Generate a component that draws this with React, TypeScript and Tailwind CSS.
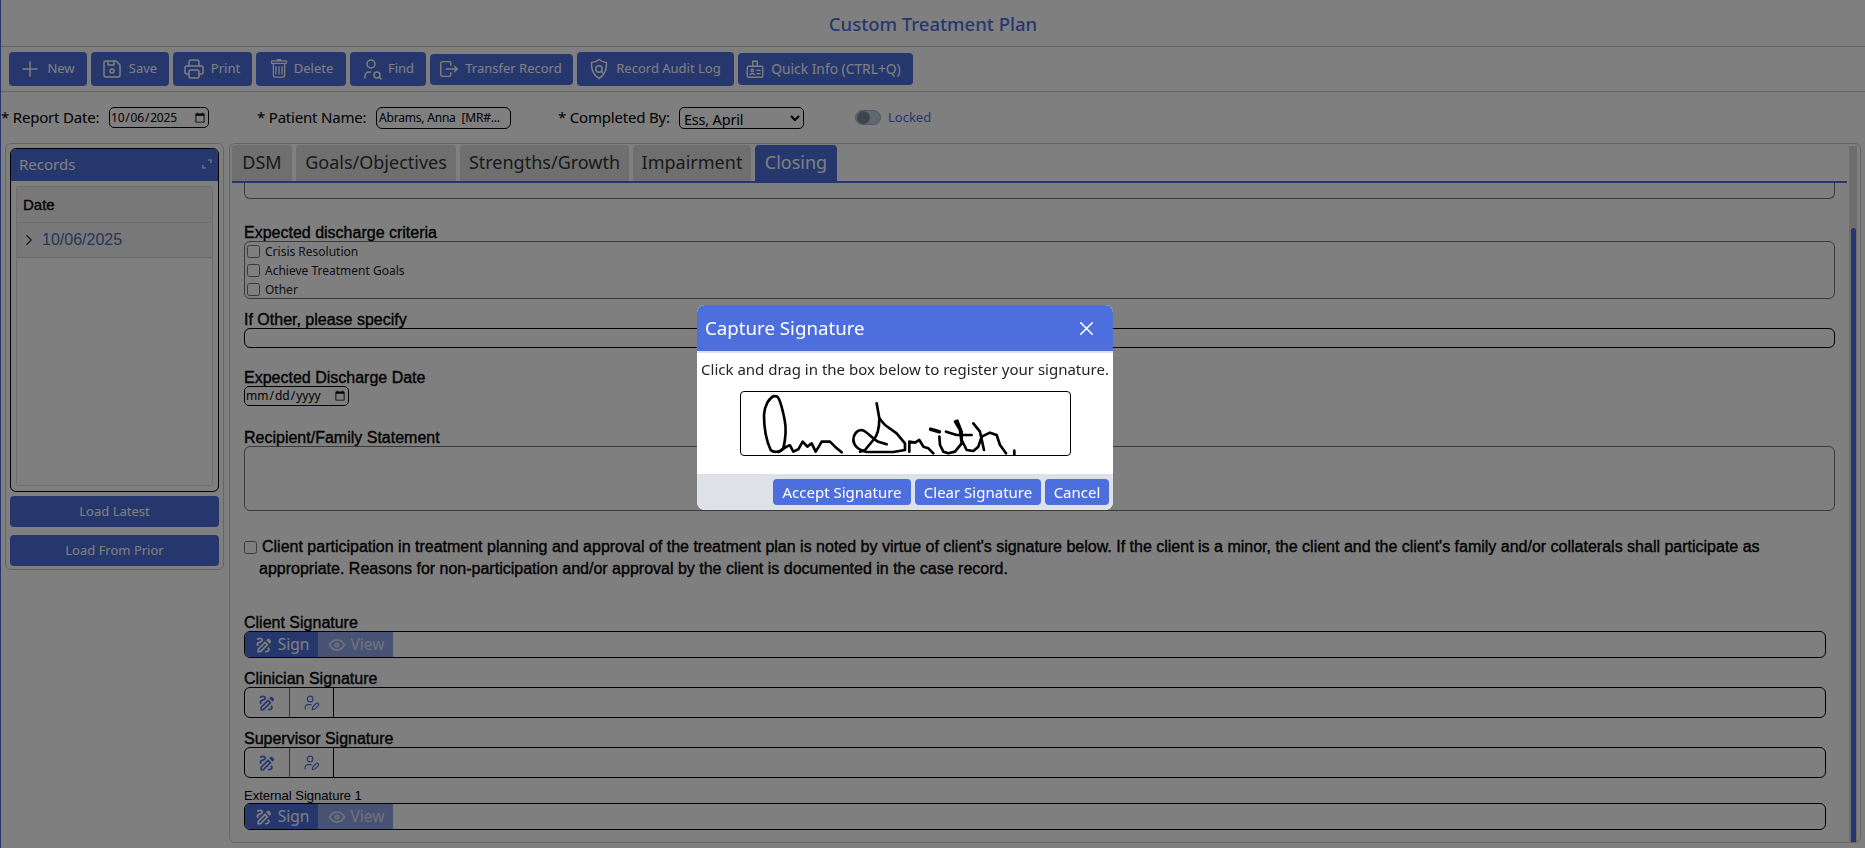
import { TbPlus, TbDeviceFloppy, TbPrinter, TbUserSearch, TbLogout, TbEye, TbChevronRight, TbX } from "react-icons/tb";
import { BsTrash } from "react-icons/bs";
import { MdOutlineDraw } from "react-icons/md";
import { UserPen } from "lucide-react";
import type { ReactNode } from "react";

function AuditIcon() {
  return (
    <svg width="24" height="24" viewBox="0 0 24 24" fill="none" stroke="currentColor" strokeWidth="1.5" strokeLinecap="round" strokeLinejoin="round">
      <path d="M12 2.5c2.5 2 5 3 7.5 3 .4 6.5-1.6 12.5-7.5 16-5.900-3.500-7.900-9.500-7.500-16 2.500 0 5-1 7.500-3z" />
      <circle cx="12" cy="12" r="3.200" />
      <path d="M14.300 14.300l1.700 1.700" />
    </svg>
  );
}

function BadgeIcon() {
  return (
    <svg width="22" height="22" viewBox="0 0 24 24" fill="none" stroke="currentColor" strokeWidth="1.5" strokeLinecap="round" strokeLinejoin="round">
      <rect x="3.500" y="9" width="17" height="12" rx="1.500" />
      <path d="M9.500 9V3.500h5V9" />
      <circle cx="9" cy="13.500" r="1.300" />
      <path d="M6.500 18c.5-1.500 4.500-1.500 5 0M14 13.500h3.500M14 17h3.500" />
    </svg>
  );
}

function ExpandIcon() {
  return (
    <svg width="10" height="10" viewBox="0 0 10 10" fill="none" stroke="currentColor" strokeWidth="1.200">
      <path d="M6 1h3v3M1 6v3h3" />
    </svg>
  );
}

const toolbar = [
  { label: "New", icon: <TbPlus size={24} strokeWidth={1.5} />, w: "w-[78px]", h: "h-[34px]", text: "pr-[3px] text-[13px]" },
  { label: "Save", icon: <TbDeviceFloppy size={24} strokeWidth={1.5} />, w: "w-[78px]", h: "h-[34px]", text: "pr-[3px] text-[13px]" },
  { label: "Print", icon: <TbPrinter size={24} strokeWidth={1.5} />, w: "w-[79px]", h: "h-[34px]", text: "pr-[3px] text-[13px]" },
  { label: "Delete", icon: <BsTrash size={20} />, w: "w-[90px]", h: "h-[34px]", text: "text-[13px]" },
  { label: "Find", icon: <TbUserSearch size={24} strokeWidth={1.5} />, w: "w-[76px]", h: "h-[34px]", text: "pr-[3px] text-[13px]" },
  { label: "Transfer Record", icon: <TbLogout size={22} strokeWidth={1.5} />, w: "w-[143px]", h: "h-[31px]", text: "pr-[3px] text-[13px]" },
  { label: "Record Audit Log", icon: <AuditIcon />, w: "w-[157px]", h: "h-[34px]", text: "pr-[3px] text-[13px]" },
  { label: "Quick Info (CTRL+Q)", icon: <BadgeIcon />, w: "w-[175px]", h: "h-[32px]", text: "pr-[6px] text-[13.800px]" },
];

const tabs = [
  { label: "DSM", w: "w-[60px]" },
  { label: "Goals/Objectives", w: "w-[160px]" },
  { label: "Strengths/Growth", w: "w-[169px]" },
  { label: "Impairment", w: "w-[118px]" },
];

function Label({ children, className = "" }: { children: ReactNode; className?: string }) {
  return (
    <div className={`h-[18px] font-['Liberation_Sans',sans-serif] text-[16px] leading-[20px] whitespace-nowrap text-black [-webkit-text-stroke:0.35px_black] ${className}`}>
      {children}
    </div>
  );
}

function SignButtons() {
  return (
    <div className="mr-[9px] flex h-[27px] overflow-hidden rounded-[6px] border border-black text-[15.500px] leading-none">
      <div className="flex w-[73px] items-center justify-center gap-1 bg-[#4d6fdd] text-white">
        <MdOutlineDraw size={20} />
        Sign
      </div>
      <div className="flex w-[75px] items-center justify-center gap-1 bg-[#8fa5ea] text-[#dfe5f8]">
        <TbEye size={20} />
        View
      </div>
    </div>
  );
}

function IconRow({ label }: { label: string }) {
  return (
    <div className="mt-[11px]">
      <Label>{label}</Label>
      <div className="mr-[9px] flex h-[31px] overflow-hidden rounded-[6px] border border-black text-[#4d6fdd]">
        <div className="flex w-[45px] items-center justify-center border-r border-[#4d6fdd]">
          <MdOutlineDraw size={20} />
        </div>
        <div className="flex w-[44px] items-center justify-center border-r border-black">
          <UserPen size={17} strokeWidth={1.6} />
        </div>
      </div>
    </div>
  );
}

function Signature() {
  return (
    <svg viewBox="741 392 329 63" className="h-full w-full" fill="none" stroke="black" strokeWidth="8" strokeLinejoin="round" strokeLinecap="round">
      <g transform="translate(750 390) scale(0.3333)">
        <path d="M72 18 C58 24 44 44 42 75 C42 110 48 150 62 180 C70 188 90 188 100 175 C106 150 110 120 104 90 C98 60 92 30 82 20 Z" />
        <path d="M85 186 C100 178 110 166 120 166 L130 185 L145 178 L158 155 L172 170 L185 160 L197 185 L205 172 L215 155 L240 155 L255 170 L275 187" />
        <path d="M380 40 L388 85 L405 105 L440 130 L465 160 L465 180 L430 186 L350 186 C330 182 312 170 310 150 C310 132 322 120 335 120 C350 122 370 150 385 155 L410 163" />
        <path d="M388 85 C388 115 380 140 370 150 L345 180 L330 185" />
      </g>
      <g transform="translate(880 390) scale(0.3333)">
        <path d="M88 185 L88 155 L105 158 L118 150 L130 170 L145 175 L160 190" />
        <path d="M152 118 L178 125" strokeWidth="11" />
        <path d="M178 140 L180 165 L190 185 L205 190 L225 185 L245 160 L240 120 L225 95 L232 92 L245 125 L245 150 L260 180 L280 183 L295 170 L305 140" />
        <path d="M198 125 L230 135 L275 135" />
        <path d="M280 100 L300 125 L312 180" />
        <path d="M305 140 L330 128 L350 135 L360 165 L378 190" />
        <path d="M403 182 L403 195" />
      </g>
    </svg>
  );
}

export default function App() {
  return (
    <div className="relative h-[848px] overflow-hidden border-l border-[#4d6fdd] bg-white font-['Noto_Sans',sans-serif] text-black">
      {/* Page title */}
      <div className="flex h-[47px] items-center justify-center border-b border-[#ccc] pt-[2px] text-[18.500px] font-medium text-[#4d6fdd]">
        Custom Treatment Plan
      </div>

      {/* Toolbar */}
      <div className="flex h-[45px] items-center gap-1 border-b border-[#ccc] pl-2">
        {toolbar.map((b) => (
          <div key={b.label} className={`flex ${b.w} ${b.h} ${b.text} items-center justify-center gap-[5px] rounded-[4px] bg-[#4d6fdd] text-white`}>
            {b.icon}
            <span className="whitespace-nowrap">{b.label}</span>
          </div>
        ))}
      </div>

      {/* Filters */}
      <div className="flex h-[51px] items-center text-[15px] tracking-[-0.2px]">
        <span className="w-[108px] whitespace-nowrap">* Report Date:</span>
        <input type="date" defaultValue="2025-10-06" className="h-[21px] w-[100px] rounded-[5px] border border-black px-0 text-[12px]" />
        <span className="ml-[48px] w-[119px] whitespace-nowrap">* Patient Name:</span>
        <div className="flex h-[22px] w-[135px] items-center overflow-hidden rounded-[6px] border border-black px-[2px] text-[12px] whitespace-pre">Abrams, Anna  [MR#...</div>
        <span className="ml-[47px] w-[121px] whitespace-nowrap">* Completed By:</span>
        <select className="h-[22px] w-[125px] rounded-[5px] border border-black text-[14.500px]" defaultValue="Ess, April">
          <option>Ess, April</option>
        </select>
        <div className="ml-[51px] flex h-[15px] w-[26px] items-center rounded-full border border-[#9fb0c8] bg-[#c5d0e0] pl-[1px]">
          <div className="h-[13px] w-[13px] rounded-full bg-[#7f8b9c]" />
        </div>
        <span className="ml-[7px] text-[13px] tracking-normal text-[#4d6fdd]">Locked</span>
      </div>

      {/* Main */}
      <div className="flex gap-[5px] pl-1 pr-1">
        {/* Records sidebar */}
        <div className="h-[427px] w-[219px] rounded-[6px] border border-[#ccc] px-1 pt-1">
          <div className="flex h-[344px] flex-col overflow-hidden rounded-[6px] border border-black">
            <div className="flex h-[32px] items-center justify-between bg-[#4d6fdd] pb-[2px] pl-2 pr-[6px] text-[15px] text-white">
              Records
              <ExpandIcon />
            </div>
            <div className="m-[5px] flex flex-1 flex-col rounded-[3px] border border-[#ddd]">
              <div className="flex h-[36px] items-center border-b border-[#ddd] bg-[#f1f1f1] pl-[6px] pt-[2px] font-['Liberation_Sans',sans-serif] text-[15px] [-webkit-text-stroke:0.3px_black]">Date</div>
              <div className="flex h-[35px] items-center gap-[4px] border-b border-[#ddd] bg-[#f1f1f1] pl-[3px] font-['Liberation_Sans',sans-serif] text-[16px] text-[#4b6cb7]">
                <TbChevronRight size={18} strokeWidth={1.5} className="text-[#333]" />
                10/06/2025
              </div>
            </div>
          </div>
          <div className="mt-[4px] flex h-[31px] items-center justify-center rounded-[4px] bg-[#4d6fdd] text-[13px] text-white">Load Latest</div>
          <div className="mt-[8px] flex h-[31px] items-center justify-center rounded-[4px] bg-[#4d6fdd] text-[13px] text-white">Load From Prior</div>
        </div>

        {/* Form panel */}
        <div className="flex h-[700px] flex-1 rounded-[6px] border border-[#ccc] pl-[2px] pr-[3px] pt-[1px]">
          <div className="min-w-0 flex-1">
            <div className="flex h-[38px] gap-1 border-b-2 border-[#4d6fdd]">
              {tabs.map((t) => (
                <div key={t.label} className={`flex ${t.w} h-[36px] items-center justify-center rounded-t-[4px] bg-[#dfdfdf] pb-[2px] text-[18px] text-[#333]`}>
                  {t.label}
                </div>
              ))}
              <div className="flex h-[36px] w-[82px] items-center justify-center rounded-t-[4px] bg-[#4d6fdd] pb-[2px] text-[18px] text-white">Closing</div>
            </div>

            <div className="pl-[12px] pr-[12px]">
              <div className="h-[16px] rounded-b-[6px] border border-t-0 border-[#777]" />

              <Label className="mt-[24px]">Expected discharge criteria</Label>
              <div className="flex h-[58px] flex-col rounded-[6px] border border-[#777] pl-[2px] text-[12px] leading-[19px] text-[#222]">
                {["Crisis Resolution", "Achieve Treatment Goals", "Other"].map((o) => (
                  <div key={o} className="flex items-center gap-[5px]">
                    <input type="checkbox" className="h-[13px] w-[13px]" readOnly />
                    {o}
                  </div>
                ))}
              </div>

              <Label className="mt-[11px]">If Other, please specify</Label>
              <div className="h-[20px] rounded-[6px] border border-black" />

              <Label className="mt-[20px]">Expected Discharge Date</Label>
              <input type="date" className="block h-[20px] w-[105px] rounded-[5px] border border-black px-0 text-[12px]" />

              <Label className="mt-[22px]">Recipient/Family Statement</Label>
              <div className="h-[65px] rounded-[6px] border border-[#777]" />

              <div className="mt-[25px] font-['Liberation_Sans',sans-serif] text-[16px] leading-[22px] [-webkit-text-stroke:0.35px_black]">
                <div className="flex items-center gap-[5px]">
                  <input type="checkbox" className="h-[13px] w-[13px]" readOnly />
                  <span className="whitespace-nowrap">Client participation in treatment planning and approval of the treatment plan is noted by virtue of client's signature below. If the client is a minor, the client and the client's family and/or collaterals shall participate as</span>
                </div>
                <div className="pl-[15px]">appropriate. Reasons for non-participation and/or approval by the client is documented in the case record.</div>
              </div>

              <div className="mt-[33px]">
                <Label>Client Signature</Label>
                <SignButtons />
              </div>
              <IconRow label="Clinician Signature" />
              <IconRow label="Supervisor Signature" />
              <div className="mt-[10px]">
                <div className="font-['Liberation_Sans',sans-serif] text-[13px] leading-[15px]">External Signature 1</div>
                <SignButtons />
              </div>
            </div>
          </div>

          {/* Scrollbar */}
          <div className="ml-[2px] mt-[1px] flex w-[8px] flex-col items-center bg-[#dcd8d8] pt-[82px]">
            <div className="w-[5px] flex-1 rounded-t-full bg-[#4d6fdd]" />
          </div>
        </div>
      </div>

      {/* Dim backdrop */}
      <div className="fixed inset-0 bg-black/50" />

      {/* Capture signature dialog */}
      <div className="fixed left-[697px] top-[305px] w-[416px] overflow-hidden rounded-[8px] bg-white">
        <div className="flex h-[46px] items-center justify-between bg-[#4d6fdd] pl-2 pr-[15px] text-[18.700px] text-white">
          Capture Signature
          <TbX size={23} strokeWidth={1.6} />
        </div>
        <div className="h-[2px] bg-[#dee2e6]" />
        <div className="h-[121px] pt-[5px] text-center text-[15px] leading-[22px] text-[#212529]">
          <div className="whitespace-nowrap">Click and drag in the box below to register your signature.</div>
          <div className="mx-auto mt-[11px] h-[65px] w-[331px] overflow-hidden rounded-[4px] border border-black">
            <Signature />
          </div>
        </div>
        <div className="flex h-[36px] items-center justify-end gap-1 bg-[#dee2e6] pr-[4px] text-[15px] text-white">
          <div className="flex h-[26px] w-[138px] items-center justify-center rounded-[4px] bg-[#4d6fdd]">Accept Signature</div>
          <div className="flex h-[26px] w-[126px] items-center justify-center rounded-[4px] bg-[#4d6fdd]">Clear Signature</div>
          <div className="flex h-[26px] w-[64px] items-center justify-center rounded-[4px] bg-[#4d6fdd]">Cancel</div>
        </div>
      </div>
    </div>
  );
}
